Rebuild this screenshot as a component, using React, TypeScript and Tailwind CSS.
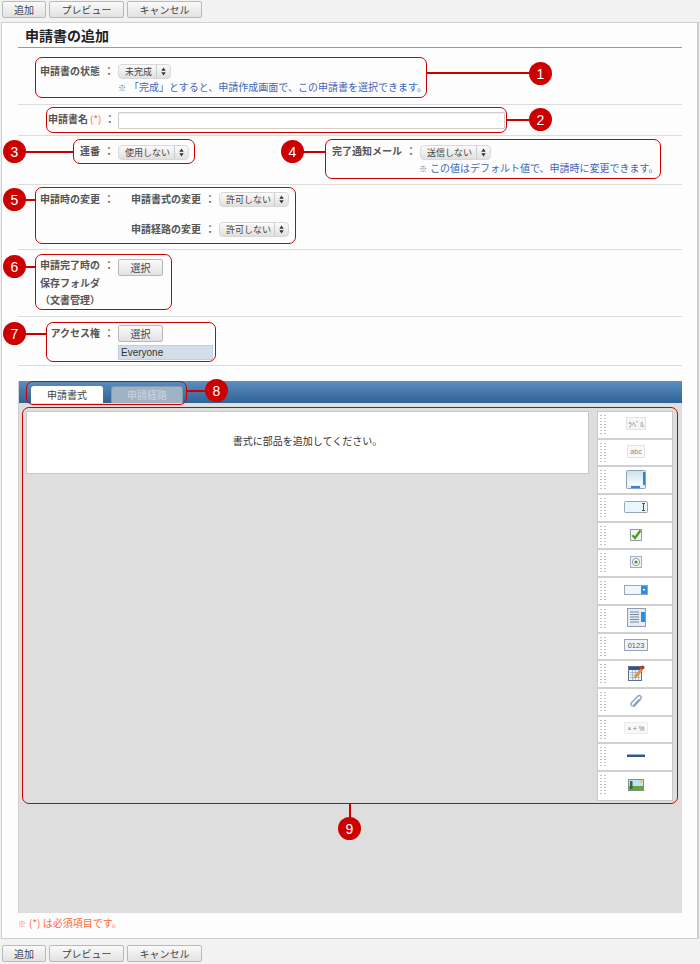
import type { ReactNode } from 'react';

const font = { fontFamily: '"Noto Sans CJK JP", "Liberation Sans", sans-serif' };

const Button = ({ children, className = '' }: { children: ReactNode; className?: string }) => (
  <div className={`h-[17px] flex items-center justify-center rounded-[2px] border border-[#b9b9b9] bg-gradient-to-b from-[#fafafa] to-[#e2e2e2] text-[10px] leading-none text-[#444] ${className}`}>
    {children}
  </div>
);

const Toolbar = () => (
  <div className="flex h-[18px] gap-[3px] pl-[2px]">
    <Button className="w-[44px]">追加</Button>
    <Button className="w-[75px]">プレビュー</Button>
    <Button className="w-[75px]">キャンセル</Button>
  </div>
);

const Select = ({ label, className = '' }: { label: string; className?: string }) => (
  <div className={`flex h-[15px] items-center rounded-[4px] border border-[#d8d8d8] bg-gradient-to-b from-[#fbfbfb] to-[#e0e0e0] text-[9px] leading-none text-[#444] ${className}`}>
    <span className="flex-1 pl-[6px] whitespace-nowrap">{label}</span>
    <span className="flex h-full w-[14px] items-center justify-center border-l border-[#cccccc]">
      <svg width="5" height="9" viewBox="0 0 5 9">
        <path d="M2.5 0.5 L4.7 3.7 H0.3 Z M2.5 8.5 L4.7 5.3 H0.3 Z" fill="#333" />
      </svg>
    </span>
  </div>
);

const Label = ({ children, className = '' }: { children: ReactNode; className?: string }) => (
  <div className={`flex shrink-0 whitespace-nowrap text-[10px] font-bold leading-[14px] text-[#555] ${className}`}>
    <span className="flex-1 text-right">{children}</span>
    <span className="w-[18px] text-center">：</span>
  </div>
);

const Note = ({ children }: { children: ReactNode }) => (
  <p className="whitespace-nowrap text-[10px] leading-[14px] text-[#3d68b8]">
    <span className="mr-[3px] text-[8px] font-bold">※</span>
    {children}
  </p>
);

const Row = ({ className, children }: { className: string; children: ReactNode }) => (
  <div className={`flex items-start border-b border-[#dcdcdc] ${className}`}>{children}</div>
);

const DottedGrip = () => (
  <div className="grid w-[6px] shrink-0 grid-cols-2 gap-x-[1px] gap-y-[2px] pt-[2px]">
    {Array.from({ length: 14 }).map((_, i) => (
      <span key={i} className="h-[1px] w-[2px] bg-[#c2c2c2]" />
    ))}
  </div>
);

const svgText = { fontFamily: '"Liberation Sans", sans-serif' };

const paletteIcons: ReactNode[] = [
  <svg width="20" height="13" viewBox="0 0 20 13">
    <rect x=".5" y=".5" width="19" height="12" fill="#f6f6f6" stroke="#ccc" strokeDasharray="1 1" />
    <text x="2" y="9.5" fontSize="7" fill="#888" textLength="16" lengthAdjust="spacingAndGlyphs" style={font}>ﾗﾍﾞﾙ</text>
  </svg>,
  <svg width="18" height="13" viewBox="0 0 18 13">
    <rect x=".5" y=".5" width="17" height="12" fill="#f8f8f8" stroke="#ccc" strokeDasharray="1 1" />
    <text x="9" y="9" textAnchor="middle" fontSize="7" fill="#888" style={svgText}>abc</text>
  </svg>,
  <svg width="20" height="19" viewBox="0 0 20 19">
    <defs>
      <linearGradient id="pane" x1="0" y1="0" x2="0" y2="1">
        <stop offset="0" stopColor="#cfe0ec" />
        <stop offset="1" stopColor="#f7fcff" />
      </linearGradient>
    </defs>
    <rect x=".5" y=".5" width="19" height="18" rx="1" fill="#e8eef3" stroke="#8f9fb3" />
    <rect x="1" y="1" width="16" height="14" fill="url(#pane)" />
    <rect x="17" y="2" width="2" height="13" fill="#2f86d8" />
    <rect x="5" y="16" width="9" height="2" fill="#2f86d8" />
  </svg>,
  <svg width="24" height="12" viewBox="0 0 24 12">
    <rect x=".5" y=".5" width="23" height="11" rx="1" fill="#e9f6fd" stroke="#97a5b7" />
    <path d="M18 2.5h3M18 9.5h3M19.5 2.5v7" stroke="#555" fill="none" />
  </svg>,
  <svg width="12" height="12" viewBox="0 0 12 12">
    <rect x=".5" y=".5" width="11" height="11" fill="#eef3f5" stroke="#8f9fb3" />
    <path d="M2.5 6.2 L5 9 L10.5 1.5" stroke="#4b9a12" strokeWidth="2.2" fill="none" />
  </svg>,
  <svg width="12" height="12" viewBox="0 0 12 12">
    <rect x=".5" y=".5" width="11" height="11" fill="#eef3f5" stroke="#a4b0be" />
    <circle cx="6" cy="6" r="3.6" fill="#fff" stroke="#8b98a8" />
    <circle cx="6" cy="6" r="1.6" fill="#3f9a14" />
  </svg>,
  <svg width="24" height="10" viewBox="0 0 24 10">
    <rect x=".5" y=".5" width="23" height="9" fill="#eef7fd" stroke="#97a5b7" />
    <rect x="17" y="1" width="6" height="8" fill="#2f8de0" />
    <path d="M18.5 4 H21.5 L20 6 Z" fill="#fff" />
  </svg>,
  <svg width="19" height="19" viewBox="0 0 19 19">
    <rect x=".5" y=".5" width="18" height="18" fill="#e7edf3" stroke="#8f9fb3" />
    <path d="M3 4h9M3 6.5h9M3 9h9M3 11.500h9M3 14h9" stroke="#7488a5" />
    <rect x="14" y="4" width="4" height="10" fill="#2f8de0" />
  </svg>,
  <svg width="24" height="12" viewBox="0 0 24 12">
    <rect x=".5" y=".5" width="23" height="11" fill="#eef5fa" stroke="#97a5b7" />
    <text x="12" y="9" textAnchor="middle" fontSize="7.500" fill="#555" style={svgText}>0123</text>
  </svg>,
  <svg width="17" height="16" viewBox="0 0 17 16">
    <rect x=".5" y="1.500" width="13" height="14" fill="#eef2f6" stroke="#5a6f8f" />
    <rect x="1" y="2" width="12" height="3" fill="#34558c" />
    <path d="M2 7.500h10M2 10h10M2 12.500h10M4.500 5v10M7.500 5v10M10.500 5v10" stroke="#9aa8bb" strokeWidth=".7" />
    <path d="M5 13.500 L7 10 L13 3 L15 5 L9 12 Z" fill="#e8922c" />
    <circle cx="14.500" cy="2.500" r="2" fill="#d92b2b" />
  </svg>,
  <svg width="14" height="14" viewBox="0 0 14 14">
    <path d="M5 12.500 L11.800 5 C13.300 3 11 .5 9 2 L2.200 9 C1 10.500 2.800 13 4.500 11.500 L10 5.500" fill="none" stroke="#8aa0c8" strokeWidth="1.300" strokeLinecap="round" />
  </svg>,
  <svg width="24" height="12" viewBox="0 0 24 12">
    <rect x=".5" y=".5" width="23" height="11" fill="#f8f8f8" stroke="#ddd" strokeDasharray="1 1" />
    <text x="12" y="8.500" textAnchor="middle" fontSize="6.500" fill="#777" style={svgText}>× + %</text>
  </svg>,
  <svg width="18" height="4" viewBox="0 0 18 4">
    <rect y="1" width="18" height="2" fill="#34558c" />
    <rect y="0" width="18" height="1" fill="#9fb0c8" />
  </svg>,
  <svg width="16" height="12" viewBox="0 0 16 12">
    <rect x=".5" y=".5" width="15" height="11" fill="#bfe3f3" stroke="#7e8b9b" />
    <rect x="1" y="7" width="14" height="4" fill="#6aa53a" />
    <circle cx="13" cy="2.500" r="1.200" fill="#f0d040" />
    <rect x="2" y="2" width="2.500" height="8" fill="#3d6b2a" />
  </svg>,
];

const Palette = () => (
  <div className="flex w-[76px] shrink-0 flex-col border border-[#c9c9c9] bg-white">
    {paletteIcons.map((icon, i) => (
      <div key={i} className="flex h-[27.700px] items-start border-b-2 border-[#d0d0d0] pl-[2px] pt-[1px] last:border-b-0">
        <DottedGrip />
        <div className="flex h-full flex-1 items-center justify-center pb-[3px] pr-[6px]">{icon}</div>
      </div>
    ))}
  </div>
);

const Annotation = ({ n, className }: { n: number; className: string }) => (
  <div className={`absolute flex h-[23px] w-[23px] items-center justify-center rounded-full bg-[#cc0000] text-[14px] leading-none text-white ${className}`} style={{ fontFamily: '"Liberation Sans", sans-serif' }}>
    {n}
  </div>
);

const Frame = ({ className }: { className: string }) => (
  <div className={`absolute rounded-[7px] border-[1.500px] border-[#cc0000] ${className}`} />
);

const Wire = ({ className }: { className: string }) => <div className={`absolute bg-[#cc0000] ${className}`} />;

export default function App() {
  return (
    <div className="relative h-[964px] w-[700px] overflow-hidden bg-[#f2f2f2]" style={font}>
      <div className="h-[22px] pt-[1px]">
        <Toolbar />
      </div>

      <div className="ml-[1px] h-[917px] w-[698px] border border-r-2 border-[#cfcfcf] bg-[#fdfdfd] pl-[16px] pr-[15px]">
        <h1 className="h-[25px] border-b border-[#9a9a9a] pl-[7px] pt-[2px] text-[14px] font-bold leading-[20px] text-[#222]">申請書の追加</h1>

        <Row className="h-[57px] pl-[22px] pt-[16px]">
          <Label className="w-[78px]">申請書の状態</Label>
          <div>
            <Select label="未完成" className="w-[53px]" />
            <div className="mt-[1px]">
              <Note>「完成」とすると、申請作成画面で、この申請書を選択できます。</Note>
            </div>
          </div>
        </Row>

        <Row className="h-[31px] pl-[30px] pt-[7px]">
          <Label className="w-[70px]">
            申請書名<span className="ml-[2px] font-normal text-[#ff6633]">(*)</span>
          </Label>
          <div className="h-[17px] w-[387px] rounded-[1px] border border-[#cfcfcf] bg-white shadow-[inset_0_1px_1px_#e8e8e8]" />
        </Row>

        <Row className="h-[49px] pt-[8px]">
          <Label className="w-[100px]">連番</Label>
          <Select label="使用しない" className="mt-[1px] w-[71px]" />
          <div className="ml-[132px] flex-1">
            <div className="flex">
              <Label className="w-[99px]">完了通知メール</Label>
              <Select label="送信しない" className="mt-[1px] w-[71px]" />
            </div>
            <div className="pl-[98px] pt-[1px]">
              <Note>この値はデフォルト値で、申請時に変更できます。</Note>
            </div>
          </div>
        </Row>

        <Row className="h-[65px] pl-[22px] pt-[7px]">
          <Label className="w-[78px]">申請時の変更</Label>
          <div className="ml-[13px] flex flex-col gap-[15px]">
            <div className="flex">
              <Label className="w-[88px]">申請書式の変更</Label>
              <Select label="許可しない" className="w-[70px]" />
            </div>
            <div className="flex">
              <Label className="w-[88px]">申請経路の変更</Label>
              <Select label="許可しない" className="w-[70px]" />
            </div>
          </div>
        </Row>

        <Row className="h-[67px] pl-[22px] pt-[6px]">
          <div className="w-[60px] whitespace-nowrap text-[10px] font-bold leading-[17.500px] text-[#555]">
            <p>申請完了時の</p>
            <p>保存フォルダ</p>
            <p>（文書管理）</p>
          </div>
          <span className="mt-[2px] w-[18px] text-center text-[10px] font-bold leading-[14px] text-[#555]">：</span>
          <Button className="mt-[3px] w-[45px]">選択</Button>
        </Row>

        <Row className="h-[49px] pt-[8px]">
          <Label className="mt-[1px] w-[100px]">アクセス権</Label>
          <div className="flex flex-col gap-[3px]">
            <Button className="w-[45px]">選択</Button>
            <div className="flex h-[15px] w-[95px] items-center border border-[#c2cfdc] bg-[#d3dee8] pl-[2px] text-[10px] leading-none text-[#333]" style={{ fontFamily: '"Liberation Sans", sans-serif' }}>
              Everyone
            </div>
          </div>
        </Row>

        <div className="mt-[15px] flex h-[532px] flex-col border-l border-[#cfcfcf]">
          <div className="flex h-[22px] shrink-0 items-end gap-[8px] bg-gradient-to-b from-[#5a8fc0] to-[#2f6296] pl-[12px]">
            <div className="flex h-[17px] w-[72px] items-center justify-center rounded-t-[3px] bg-white text-[10px] leading-none text-[#444]">申請書式</div>
            <div className="flex h-[17px] w-[72px] items-center justify-center rounded-t-[3px] border border-b-0 border-[#7f9ab5] bg-[#9fb2c6] text-[10px] font-bold leading-none text-[#c2ccd8]">申請経路</div>
          </div>
          <div className="flex flex-1 items-start gap-[8px] bg-[#dedede] pl-[7px] pt-[8px]">
            <div className="flex h-[63px] w-[563px] items-center justify-center border border-[#c9c9c9] bg-white pb-[3px] text-[10px] leading-none text-[#333]">
              書式に部品を追加してください。
            </div>
            <Palette />
          </div>
        </div>

        <p className="pt-[3px] text-[10px] leading-[14px] text-[#ff6a3c]">
          <span className="mr-[3px] text-[8px] font-bold">※</span>(*) は必須項目です。
        </p>
      </div>

      <div className="pt-[6px]">
        <Toolbar />
      </div>

      {/* callouts on top of the form */}
      <Frame className="left-[35px] top-[57px] h-[41px] w-[392px]" />
      <Frame className="left-[46px] top-[107px] h-[26px] w-[461px]" />
      <Frame className="left-[73px] top-[139px] h-[25px] w-[122px]" />
      <Frame className="left-[325px] top-[139px] h-[40px] w-[336px]" />
      <Frame className="left-[35px] top-[187px] h-[57px] w-[261px]" />
      <Frame className="left-[35px] top-[254px] h-[56px] w-[137px]" />
      <Frame className="left-[46px] top-[322px] h-[40px] w-[170px]" />
      <Frame className="left-[26px] top-[381px] h-[24px] w-[161px]" />
      <Frame className="left-[22px] top-[407px] h-[397px] w-[656px]" />

      <Wire className="left-[427px] top-[72px] h-[1.500px] w-[105px]" />
      <Wire className="left-[507px] top-[119px] h-[1.500px] w-[25px]" />
      <Wire className="left-[25px] top-[151px] h-[1.500px] w-[48px]" />
      <Wire className="left-[300px] top-[151px] h-[1.500px] w-[25px]" />
      <Wire className="left-[25px] top-[199px] h-[1.500px] w-[10px]" />
      <Wire className="left-[25px] top-[266px] h-[1.500px] w-[10px]" />
      <Wire className="left-[25px] top-[333px] h-[1.500px] w-[21px]" />
      <Wire className="left-[187px] top-[390px] h-[1.500px] w-[20px]" />
      <Wire className="left-[349px] top-[804px] h-[14px] w-[1.500px]" />

      <Annotation n={1} className="left-[529px] top-[62px]" />
      <Annotation n={2} className="left-[529px] top-[108px]" />
      <Annotation n={3} className="left-[3px] top-[140px]" />
      <Annotation n={4} className="left-[281px] top-[140px]" />
      <Annotation n={5} className="left-[3px] top-[188px]" />
      <Annotation n={6} className="left-[3px] top-[255px]" />
      <Annotation n={7} className="left-[3px] top-[322px]" />
      <Annotation n={8} className="left-[205px] top-[379px]" />
      <Annotation n={9} className="left-[338px] top-[817px]" />
    </div>
  );
}
